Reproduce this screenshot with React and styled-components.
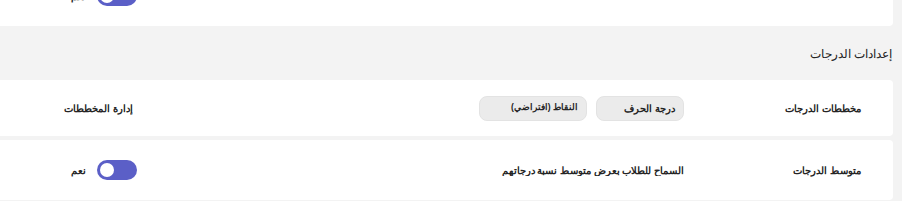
import React from 'react';
import styled, { createGlobalStyle } from 'styled-components';

const GlobalStyle = createGlobalStyle`
  html, body {
    margin: 0;
    padding: 0;
    background: #f3f3f3;
    overflow: hidden;
  }
  body {
    font-family: 'Liberation Sans', Arial, sans-serif;
    color: #242424;
  }
`;

const Page = styled.div`
  direction: rtl;
  margin-top: -34px;
  margin-left: -16px;
  padding-right: 9px;
  display: flex;
  flex-direction: column;
`;

const Card = styled.div`
  background: #ffffff;
  border-radius: 4px;
  margin-bottom: ${(p) => (p.$gap ? p.$gap : 0)}px;
`;

const Row = styled.div`
  display: flex;
  align-items: center;
  height: ${(p) => p.$h}px;
  padding-right: 32px;
`;

const Label = styled.div`
  width: 177px;
  flex-shrink: 0;
  font-size: 9.5px;
  font-weight: 700;
  white-space: nowrap;
`;

const Content = styled.div`
  flex: 1;
  display: flex;
  align-items: center;
  gap: 9px;
  font-size: 9.5px;
  font-weight: 700;
  white-space: nowrap;
  overflow: hidden;
`;

const EnglishText = styled.span`
  font-family: 'Liberation Sans', Arial, sans-serif;
  font-weight: 400;
  font-size: 12px;
  color: #242424;
`;

const Action = styled.div`
  width: 153px;
  flex-shrink: 0;
  display: flex;
  align-items: center;
  gap: 11px;
  padding-right: ${(p) => p.$inset || 0}px;
  box-sizing: border-box;
  font-size: 9.5px;
  font-weight: 700;
  white-space: nowrap;
`;

const SectionTitle = styled.h2`
  margin: 0;
  padding: 19px 1px 17px 0;
  font-size: 11.5px;
  font-weight: 400;
  line-height: 18px;
  color: #242424;
`;

const Pill = styled.div`
  height: 25px;
  width: ${(p) => p.$w}px;
  box-sizing: border-box;
  padding: 0 8px;
  display: flex;
  align-items: ${(p) => (p.$top ? 'flex-start' : 'center')};
  padding-top: ${(p) => (p.$top ? 5 : 0)}px;
  background: #ebebeb;
  border: 1px solid #e3e3e3;
  border-radius: 8px;
  font-size: ${(p) => (p.$small ? 8.5 : 9.5)}px;
  font-weight: 700;
  color: #242424;
`;

const Toggle = styled.div`
  width: 40px;
  height: 20px;
  border-radius: 10px;
  background: #5b5fc7;
  display: flex;
  align-items: center;
  justify-content: flex-end;
  padding: 0 3px;
  box-sizing: border-box;
  flex-shrink: 0;
`;

const Knob = styled.div`
  width: 14px;
  height: 14px;
  border-radius: 50%;
  background: #ffffff;
`;

const ToggleText = styled.span`
  font-size: 9.5px;
  font-weight: 700;
`;

export default function App() {
  return (
    <>
      <GlobalStyle />
      <Page>
        <Card>
          <Row $h={60}>
            <Label />
            <Content>
              <EnglishText>Enable calculations for students in this class</EnglishText>
            </Content>
            <Action>
              <Toggle><Knob /></Toggle>
              <ToggleText>نعم</ToggleText>
            </Action>
          </Row>
        </Card>

        <SectionTitle>إعدادات الدرجات</SectionTitle>

        <Card $gap={4}>
          <Row $h={56}>
            <Label>مخططات الدرجات</Label>
            <Content>
              <Pill $w={88}>درجة الحرف</Pill>
              <Pill $w={108} $small $top>النقاط (افتراضي)</Pill>
            </Content>
            <Action $inset={4}>إدارة المخططات</Action>
          </Row>
        </Card>

        <Card>
          <Row $h={60}>
            <Label>متوسط الدرجات</Label>
            <Content>السماح للطلاب بعرض متوسط نسبة درجاتهم</Content>
            <Action>
              <Toggle><Knob /></Toggle>
              <ToggleText>نعم</ToggleText>
            </Action>
          </Row>
        </Card>
      </Page>
    </>
  );
}
